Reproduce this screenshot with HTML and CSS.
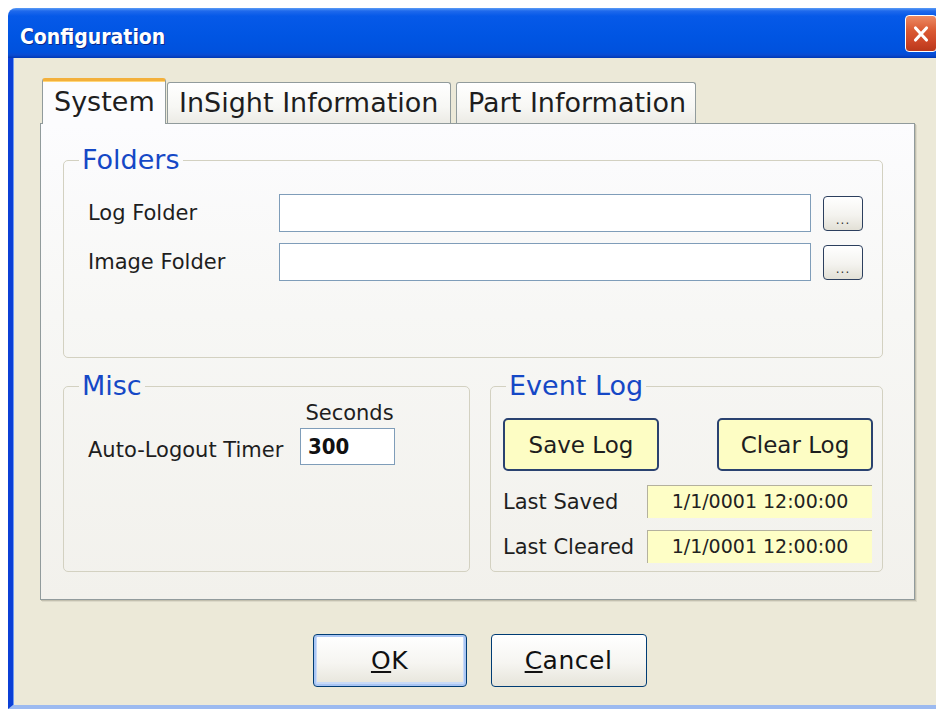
FILE: index.html
```html
<!DOCTYPE html>
<html lang="en">
<head>
<meta charset="utf-8">
<title>Configuration</title>
<link rel="stylesheet" href="styles.css">
</head>
<body>
<div class="window">
  <div class="titlebar">
    <span class="title">Configuration</span>
    <button class="close" aria-label="Close">
      <svg viewBox="0 0 20 20" width="22" height="22"><path d="M5 4.5 L15 15.5 M15 4.5 L5 15.5" stroke="#fff" stroke-width="2.8" stroke-linecap="round" fill="none"/></svg>
    </button>
  </div>
  <div class="frame">
    <div class="tabs">
      <div class="tab tab-system active">System</div>
      <div class="tab tab-insight">InSight Information</div>
      <div class="tab tab-part">Part Information</div>
    </div>
    <div class="page">
      <fieldset class="group">
        <legend>Folders</legend>
        <div class="folders-body">
          <div class="path-row">
            <span class="path-label">Log Folder</span>
            <div class="textbox path-box"></div>
            <button class="browse">...</button>
          </div>
          <div class="path-row">
            <span class="path-label">Image Folder</span>
            <div class="textbox path-box"></div>
            <button class="browse">...</button>
          </div>
        </div>
      </fieldset>
      <div class="lower">
        <fieldset class="group">
          <legend>Misc</legend>
          <div class="misc-body">
            <span class="timer-label">Auto-Logout Timer</span>
            <div class="seconds-col">
              <span class="seconds-label">Seconds</span>
              <div class="textbox num-box">300</div>
            </div>
          </div>
        </fieldset>
        <fieldset class="group">
          <legend>Event Log</legend>
          <div class="event-body">
            <div class="log-buttons">
              <button class="yellow-btn">Save Log</button>
              <button class="yellow-btn">Clear Log</button>
            </div>
            <div class="stamp-row">
              <span class="stamp-label">Last Saved</span>
              <div class="stamp">1/1/0001 12:00:00</div>
            </div>
            <div class="stamp-row">
              <span class="stamp-label">Last Cleared</span>
              <div class="stamp">1/1/0001 12:00:00</div>
            </div>
          </div>
        </fieldset>
      </div>
    </div>
    <div class="actions">
      <button class="btn default"><u>O</u>K</button>
      <button class="btn"><u>C</u>ancel</button>
    </div>
  </div>
</div>
</body>
</html>
```
FILE: styles.css
```css
html, body {
  margin: 0;
  height: 100%;
  overflow: hidden;
  background: #fff;
}

body {
  font-family: "DejaVu Sans", sans-serif;
  color: #1e1e1e;
}

button {
  font-family: inherit;
  color: inherit;
  padding: 0;
  cursor: default;
}

.window {
  margin: 8px 0 0 8px;
  width: 940px;
}

/* Luna title bar */
.titlebar {
  height: 50px;
  border-radius: 8px 8px 0 0;
  background: linear-gradient(180deg, #5a9cf6 0px, #1f69ec 3px, #0659e8 8px, #0055e3 28px, #0051dd 44px, #0a4bd2 47px, #0038b4 50px);
  display: flex;
  justify-content: space-between;
  align-items: flex-start;
}

.title {
  font-family: "DejaVu Sans Condensed", "DejaVu Sans", sans-serif;
  font-stretch: condensed;
  font-weight: bold;
  font-size: 21px;
  line-height: 22px;
  color: #fff;
  text-shadow: 1px 1px 0 #0b2a8c;
  padding: 18px 0 0 12px;
}

.close {
  width: 32px;
  height: 37px;
  margin: 7px 11px 0 0;
  box-sizing: border-box;
  border: 1.5px solid #fff;
  border-radius: 4px;
  background: linear-gradient(180deg, #ec8a63 0%, #db5b34 40%, #cc4526 75%, #b9381b 100%);
  display: flex;
  align-items: center;
  justify-content: center;
}

/* window body */
.frame {
  height: 651px;
  box-sizing: border-box;
  border-left: 5px solid #0b3fd6;
  border-bottom: 4px solid #9cbaf0;
  box-shadow: inset 1px 0 0 #6f9bf2;
  background: #ece9d8;
  padding: 20px 0 0 27px;
}

/* tab strip */
.tabs {
  display: flex;
  align-items: flex-end;
  height: 45px;
  margin-left: 2px;
}

.tab {
  height: 41px;
  box-sizing: border-box;
  border: 1px solid #919b9c;
  border-bottom: none;
  border-radius: 3px 3px 0 0;
  background: linear-gradient(180deg, #ffffff 0%, #f7f7f4 60%, #ecebe5 100%);
  font-size: 27px;
  line-height: 40px;
  padding-left: 11px;
  white-space: nowrap;
}

.tab.active {
  height: 46px;
  margin-bottom: -1px;
  border-top: 3px solid #f3b03b;
  box-shadow: inset 0 1px 0 #ffd67a;
  background: #fcfcfe;
  line-height: 41px;
  position: relative;
  z-index: 1;
}

.tab-system { width: 124px; }
.tab-insight { width: 284px; margin-left: 1px; }
.tab-part { width: 240px; margin-left: 5px; }

/* tab page */
.page {
  width: 875px;
  height: 477px;
  box-sizing: border-box;
  border: 1px solid #919b9c;
  box-shadow: 1px 1px 0 #c2bfae, 2px 2px 0 #dcd9c9;
  background: linear-gradient(180deg, #fcfcfe 0%, #f7f7f5 40%, #f2f1ec 100%);
  padding: 22px 31px 0 22px;
}

/* group boxes */
.group {
  margin: 0;
  padding: 0;
  min-width: 0;
  border: 1px solid #d3d1c1;
  border-radius: 5px;
}

.group legend {
  font-size: 27px;
  line-height: 28px;
  color: #1548c6;
  margin-left: 15px;
  padding: 0 3px;
}

.folders-body {
  padding: 20px 0 76px 24px;
  display: flex;
  flex-direction: column;
  gap: 11px;
}

.path-row {
  display: flex;
  align-items: center;
  height: 38px;
}

.path-label {
  width: 191px;
  font-size: 21px;
}

.textbox {
  box-sizing: border-box;
  background: #fff;
  border: 1px solid #7f9db9;
}

.path-box {
  width: 532px;
  height: 38px;
}

.browse {
  width: 40px;
  height: 35px;
  margin-left: 12px;
  box-sizing: border-box;
  border: 1px solid #2c3f5e;
  border-radius: 4px;
  background: linear-gradient(180deg, #ffffff 0%, #f4f3ef 55%, #e2e0d6 100%);
  font-size: 12px;
  line-height: 1;
  padding-top: 14px;
  letter-spacing: 1px;
  color: #333;
}

.lower {
  display: grid;
  grid-template-columns: 407px 393px;
  column-gap: 20px;
  margin-top: 14px;
}

/* Misc */
.misc-body {
  padding: 1px 0 0 24px;
  display: flex;
  align-items: flex-end;
}

.timer-label {
  width: 212px;
  font-size: 21px;
  line-height: 30px;
}

.seconds-col {
  width: 95px;
  display: flex;
  flex-direction: column;
  gap: 3px;
}

.seconds-label {
  font-size: 21px;
  line-height: 24px;
  text-align: center;
  padding-left: 4px;
}

.num-box {
  height: 37px;
  padding-left: 7px;
  font-family: "DejaVu Sans Condensed", "DejaVu Sans", sans-serif;
  font-stretch: condensed;
  font-weight: bold;
  font-size: 22px;
  line-height: 35px;
  color: #111;
}

/* Event Log */
.event-body {
  padding: 18px 9px 8px 12px;
}

.log-buttons {
  display: flex;
  justify-content: space-between;
}

.yellow-btn {
  width: 156px;
  height: 53px;
  box-sizing: border-box;
  border: 2px solid #2a4270;
  border-radius: 5px;
  background: #fdfdc4;
  font-size: 23px;
}

.stamp-row {
  display: flex;
  align-items: center;
  margin-top: 12px;
}

.log-buttons + .stamp-row {
  margin-top: 14px;
}

.stamp-label {
  width: 144px;
  font-size: 21px;
}

.stamp {
  width: 225px;
  height: 33px;
  box-sizing: border-box;
  border-top: 1px solid #b4b19e;
  border-left: 1px solid #b4b19e;
  background: #fefec6;
  font-size: 19px;
  line-height: 31px;
  text-align: center;
  color: #222;
}

/* dialog buttons */
.actions {
  width: 875px;
  margin-top: 34px;
  padding-left: 4px;
  box-sizing: border-box;
  display: flex;
  justify-content: center;
  gap: 24px;
}

.btn {
  width: 154px;
  height: 53px;
  box-sizing: border-box;
  border: 1px solid #003c74;
  border-radius: 4px;
  background: linear-gradient(180deg, #ffffff 0%, #f6f5f1 55%, #e6e4da 100%);
  font-size: 25px;
  letter-spacing: 0.5px;
  color: #111;
}

.btn + .btn {
  width: 156px;
}

.btn.default {
  box-shadow: inset 0 0 0 2px #aac6f4, inset 0 -1px 0 3px #c9dbf8;
}
```
